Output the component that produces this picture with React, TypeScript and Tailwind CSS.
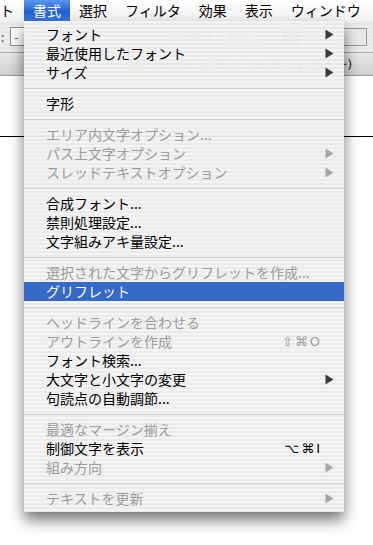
import React from 'react'

type Item =
  | { sep: true }
  | { label: string; disabled?: boolean; arrow?: boolean; shortcut?: string; selected?: boolean }

const items: Item[] = [
  { label: 'フォント', arrow: true },
  { label: '最近使用したフォント', arrow: true },
  { label: 'サイズ', arrow: true },
  { sep: true },
  { label: '字形' },
  { sep: true },
  { label: 'エリア内文字オプション...', disabled: true },
  { label: 'パス上文字オプション', disabled: true, arrow: true },
  { label: 'スレッドテキストオプション', disabled: true, arrow: true },
  { sep: true },
  { label: '合成フォント...' },
  { label: '禁則処理設定...' },
  { label: '文字組みアキ量設定...' },
  { sep: true },
  { label: '選択された文字からグリフレットを作成...', disabled: true },
  { label: 'グリフレット', selected: true },
  { sep: true },
  { label: 'ヘッドラインを合わせる', disabled: true },
  { label: 'アウトラインを作成', disabled: true, shortcut: '⇧⌘O' },
  { label: 'フォント検索...' },
  { label: '大文字と小文字の変更', arrow: true },
  { label: '句読点の自動調節...' },
  { sep: true },
  { label: '最適なマージン揃え', disabled: true },
  { label: '制御文字を表示', shortcut: '⌥⌘I' },
  { label: '組み方向', disabled: true, arrow: true },
  { sep: true },
  { label: 'テキストを更新', disabled: true, arrow: true },
]

const font = "font-['Noto_Sans_CJK_JP','Noto_Sans',sans-serif]"

function Arrow({ disabled, white }: { disabled?: boolean; white?: boolean }) {
  const fill = white ? '#ffffff' : disabled ? '#a6a6a6' : '#3a3a3a'
  return (
    <svg width="9" height="11" viewBox="0 0 9 11" className="block">
      <polygon points="0.5,0.5 8.5,5.5 0.5,10.5" fill={fill} />
    </svg>
  )
}

function MenuRow({ item }: { item: Item }) {
  if ('sep' in item) {
    return (
      <div className="h-[12px] flex items-center">
        <div className="h-px w-full bg-[#d2d2d2]" />
      </div>
    )
  }
  const color = item.selected ? 'text-white' : item.disabled ? 'text-[#9c9c9c]' : 'text-black'
  return (
    <div
      className={`h-[19px] flex items-center pl-[22px] pr-[10px] text-[14px] leading-[19px] ${color} ${
        item.selected ? 'bg-[#356ac9]' : ''
      }`}
    >
      <span className="flex-1 whitespace-nowrap">{item.label}</span>
      {item.shortcut && (
        <span className="mr-[12px] font-['DejaVu_Sans',sans-serif] text-[13px] tracking-[2px]">
          {item.shortcut}
        </span>
      )}
      {item.arrow && <Arrow disabled={item.disabled} white={item.selected} />}
    </div>
  )
}

export default function App() {
  return (
    <div className={`relative w-[373px] h-[545px] overflow-hidden bg-white ${font}`}>
      {/* menu bar */}
      <div className="h-[21px] flex items-stretch text-[14px] leading-[21px] text-black bg-[linear-gradient(#ffffff,#f1f1f1)]">
        <span className="w-[24px]">ト</span>
        <span className="px-[9px] text-white bg-[linear-gradient(#5b95ec,#2a66d6_50%,#1d5ccf_51%,#3a7ae3)]">書式</span>
        <span className="px-[9px]">選択</span>
        <span className="px-[9px]">フィルタ</span>
        <span className="px-[9px]">効果</span>
        <span className="px-[9px]">表示</span>
        <span className="px-[9px]">ウィンドウ</span>
      </div>

      {/* tool options bar */}
      <div className="h-[32px] flex items-center gap-[6px] text-[12px] text-[#444] border-b border-[#a9a9a9] bg-[repeating-linear-gradient(to_bottom,#eeeeee_0px,#eeeeee_2px,#e6e6e6_2px,#e6e6e6_4px)]">
        <span className="ml-[1px]">:</span>
        <div className="w-[24px] h-[19px] bg-white border border-[#8e8e8e] flex items-center pl-[3px] leading-none">-</div>
        <span className="ml-[50px] text-[#6a7fa8]">▼</span>
        <span className="ml-[60px] text-[#4a67b0] underline">文字揃え</span>
        <div className="w-[40px] h-[19px] bg-white border border-[#9a9a9a] pl-[3px] leading-[17px]">100</div>
        <div className="ml-[14px] w-[18px] h-[16px] bg-[#5b86c8] rounded-[2px]" />
        <span>%</span>
        <div className="ml-[14px] w-[30px] h-[18px] border border-[#9a9a9a] bg-[#e9e9e9]" />
      </div>

      {/* document title bar */}
      <div className="h-[23px] flex items-center border-b border-[#9a9a9a] bg-[linear-gradient(#e8e8e8,#cfcfcf)] text-[13px] text-[#333]">
        <div className="ml-[131px] w-[14px] h-[14px] bg-[#d28a3a] rounded-[2px]" />
        <span className="ml-[5px] font-['DejaVu_Sans',sans-serif] tracking-[-0.3px] whitespace-nowrap">
          sample @ 92% (RGB/<span className={font}>プレビュー</span>)
        </span>
      </div>

      {/* canvas */}
      <div className="pt-[60px]">
        <div className="h-px bg-black" />
      </div>

      {/* dropdown menu */}
      <div className="absolute left-[24px] top-[21px] w-[320px] pt-[4px] pb-[4px] bg-[repeating-linear-gradient(to_bottom,rgba(243,243,243,0.96)_0px,rgba(243,243,243,0.96)_2px,rgba(234,234,234,0.96)_2px,rgba(234,234,234,0.96)_4px)] shadow-[0_8px_14px_rgba(0,0,0,0.55)]">
        {items.map((it, i) => (
          <MenuRow key={i} item={it} />
        ))}
      </div>
    </div>
  )
}
